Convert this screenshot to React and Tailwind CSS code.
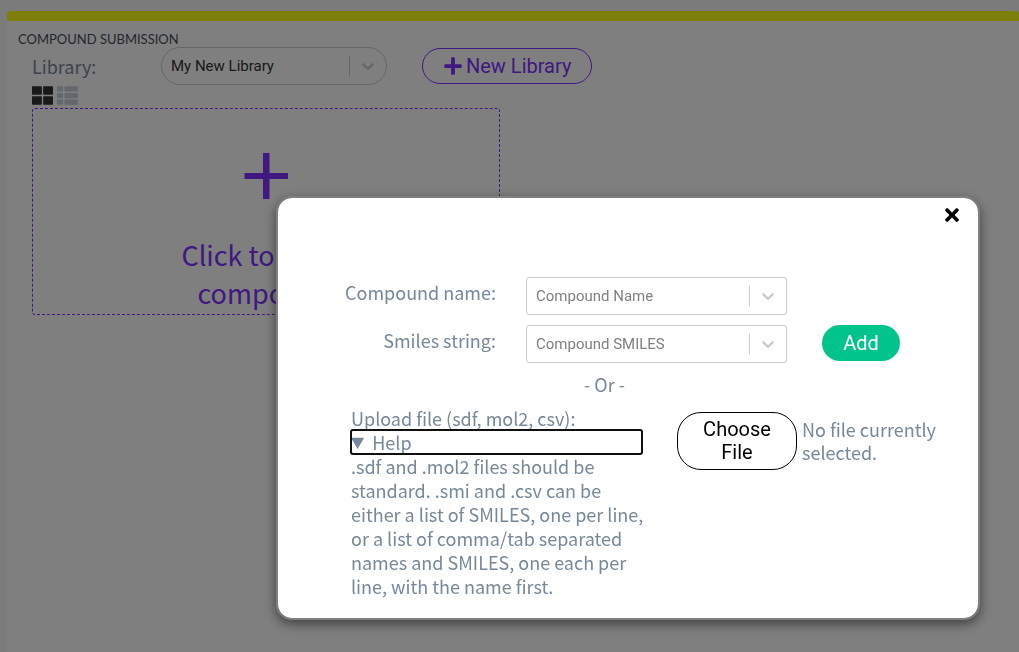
import React, { useRef, useState } from "react";
import { FaPlus, FaThLarge, FaThList, FaTimes } from "react-icons/fa";

const Chevron = () => (
  <svg viewBox="0 0 20 20" className="w-5 h-5 fill-current" aria-hidden="true">
    <path d="M4.516 7.548c0.436-0.446 1.043-0.481 1.576 0l3.908 3.747 3.908-3.747c0.533-0.481 1.141-0.446 1.574 0 0.436 0.445 0.408 1.197 0 1.615-0.406 0.418-4.695 4.502-4.695 4.502-0.217 0.223-0.502 0.335-0.787 0.335s-0.57-0.112-0.789-0.335c0 0-4.287-4.084-4.695-4.502s-0.436-1.17 0-1.615z" />
  </svg>
);

const SelectBox = ({ id, options, className, textClass }) => (
  <div className={`flex items-center h-[38px] border border-[#ccc] ${className}`}>
    <select
      id={id}
      className={`flex-1 min-w-0 h-full pl-[9px] appearance-none bg-transparent outline-none font-[Roboto,sans-serif] text-[15px] ${textClass}`}
    >
      {options.map((option) => (
        <option key={option}>{option}</option>
      ))}
    </select>
    <span className="w-px h-5 bg-[#ccc]" />
    <span className="px-2 text-[#ccc]">
      <Chevron />
    </span>
  </div>
);

const Library = () => (
  <main className="ml-[7px] min-h-[641px] rounded-t-sm border-t-10 border-[#fbff14] bg-white">
    <h1 className="pt-[10px] pl-[11px] text-[13px] leading-4 text-[#46505a] font-[Lato,sans-serif]">
      COMPOUND SUBMISSION
    </h1>

    <div className="pl-[25px]">
      <div className="flex items-center">
        <label htmlFor="library" className="w-[129px]">
          Library:
        </label>
        <SelectBox id="library" options={["My New Library"]} className="w-[226px] rounded-full" textClass="text-[#333]" />
        <button className="flex items-center gap-[3px] ml-[35px] h-9 px-5 border border-[#8031ff] rounded-full text-[#8031ff] text-xl font-[Roboto,sans-serif]">
          <FaPlus className="w-5 h-5" />
          New Library
        </button>
      </div>

      <div className="flex gap-1 text-[21px]">
        <button aria-label="Grid view" className="text-[#333]">
          <FaThLarge />
        </button>
        <button aria-label="List view" className="text-[#c4d0dc]">
          <FaThList />
        </button>
      </div>

      <button className="flex flex-col items-center w-[468px] h-[207px] mt-[2px] pt-11 border border-dashed border-[#8031ff] rounded-[3px] text-[#8031ff]">
        <svg viewBox="0 0 44 46" className="w-11 h-[46px] fill-current" aria-hidden="true">
          <path d="M19 0h6.5v20h18.5v6h-18.5v20h-6.5v-20h-18.5v-6h18.5z" />
        </svg>
        <span className="w-[172px] mt-[37px] text-[27px] leading-[38px] text-center">Click to add a compound</span>
      </button>
    </div>
  </main>
);

const AddCompound = ({ onClose }) => {
  const fileInput = useRef(null);
  const [fileName, setFileName] = useState("");

  return (
    <div
      role="dialog"
      aria-label="Add compound"
      className="w-full max-w-[704px] pb-5 border-2 border-[#808080] rounded-2xl bg-white bg-clip-padding shadow-[0_4px_12px_rgba(0,0,0,0.5)]"
    >
      <div className="flex justify-end h-[79px] pt-[7px] pr-4">
        <button aria-label="Close" onClick={onClose} className="self-start text-black text-xl">
          <FaTimes />
        </button>
      </div>

      <div className="grid grid-cols-[218px_261px_1fr] gap-y-[10px]">
        <label htmlFor="name" className="pt-[3px] text-right">
          Compound name:
        </label>
        <SelectBox id="name" options={["Compound Name"]} className="col-span-2 w-[261px] ml-[30px] rounded-[3px]" textClass="text-[#808080]" />
        <label htmlFor="smiles" className="pt-[3px] text-right">
          Smiles string:
        </label>
        <SelectBox id="smiles" options={["Compound SMILES"]} className="w-[261px] ml-[30px] rounded-[3px]" textClass="text-[#808080]" />
        <button className="ml-[65px] w-[78px] h-9 rounded-full bg-[#00c48c] text-white text-xl font-[Roboto,sans-serif]">
          Add
        </button>
      </div>

      <p className="mt-[9px] pl-[306px]">- Or -</p>

      <div className="flex items-start gap-[30px] mt-[10px] pl-[73px]">
        <div className="w-[296px]">
          <p>Upload file (sdf, mol2, csv):</p>
          <details open>
            <summary className="mr-[5px] rounded-[2px] outline-2 outline-[#101010] -outline-offset-1 marker:text-[20px]">
              Help
            </summary>
            .sdf and .mol2 files should be standard. .smi and .csv can be either a list of SMILES, one per line, or a
            list of comma/tab separated names and SMILES, one each per line, with the name first.
          </details>
        </div>
        <div className="flex items-center gap-[5px] mt-[6px]">
          <input
            ref={fileInput}
            type="file"
            aria-label="Compound file"
            className="hidden"
            onChange={(e) => setFileName(e.target.files[0]?.name || "")}
          />
          <button
            onClick={() => fileInput.current.click()}
            className="w-[120px] h-[58px] px-5 border border-black rounded-3xl text-black text-xl leading-[23px] font-[Roboto,sans-serif]"
          >
            Choose File
          </button>
          <span className="w-[140px] leading-[23px]">{fileName || "No file currently selected."}</span>
        </div>
      </div>
    </div>
  );
};

const App = () => {
  const [open, setOpen] = useState(true);

  return (
    <div className="min-h-screen pt-[11px] bg-[#f6f6f6] text-[#778899] text-lg leading-6 font-['Noto_Sans_CJK_SC',sans-serif]">
      <Library />
      {open && (
        <div className="fixed inset-0 flex items-end justify-end pr-[39px] pb-8 bg-black/50">
          <AddCompound onClose={() => setOpen(false)} />
        </div>
      )}
    </div>
  );
};

export default App;
